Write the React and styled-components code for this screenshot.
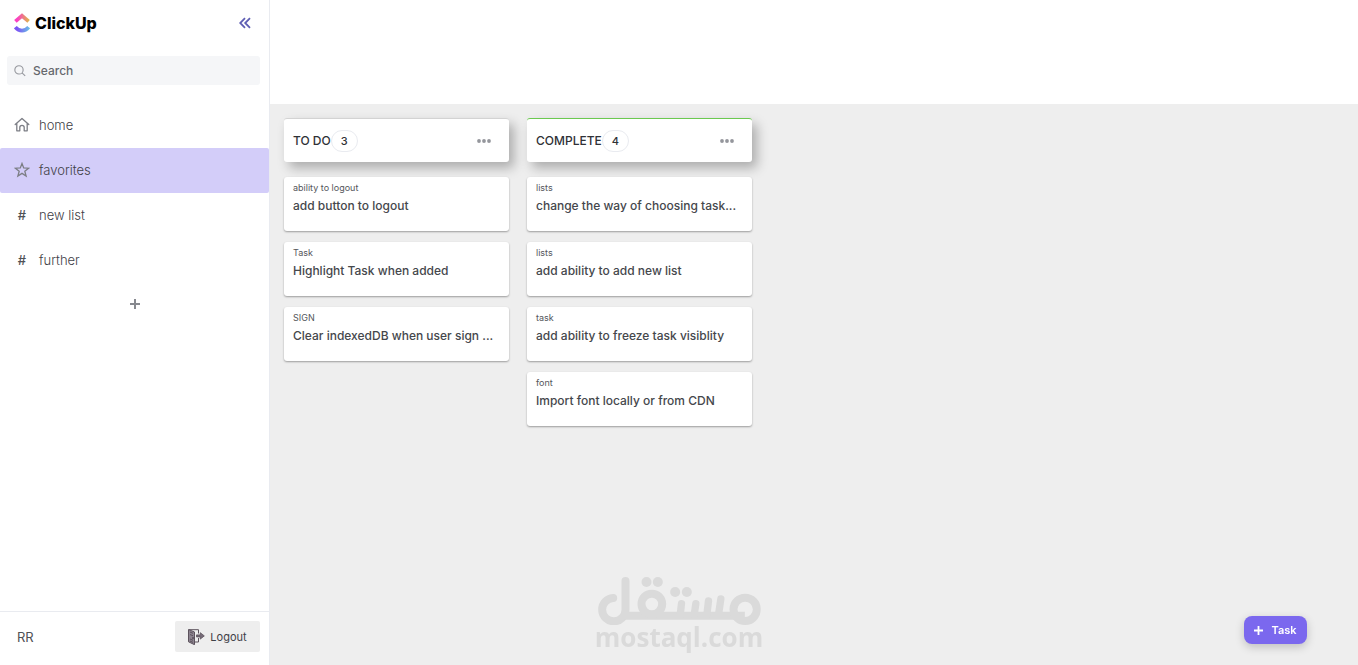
import React, { useState } from "react"
import styled, { createGlobalStyle } from "styled-components"

const GlobalStyle = createGlobalStyle`
    * {
        box-sizing: border-box;
    }
    body {
        margin: 0;
        font-family: "Inter", "Liberation Sans", sans-serif;
        font-size: 13px;
        color: #4f5155;
        background: #ffffff;
    }
    button, input {
        font-family: inherit;
    }
`

const Layout = styled.div`
    display: flex;
    min-height: 100vh;
`
const Sidebar = styled.aside`
    display: flex;
    flex-direction: column;
    flex: 0 0 270px;
    border-right: 1px solid #e9ebf0;
    background: #ffffff;
`
const Brand = styled.div`
    display: flex;
    align-items: center;
    justify-content: space-between;
    height: 46px;
    padding: 0 18px 0 14px;
`
const Logo = styled.a`
    display: flex;
    align-items: center;
    gap: 5px;
    color: #000000;
    font-size: 16px;
    font-weight: 800;
    text-decoration: none;
`
const IconButton = styled.button`
    display: flex;
    align-items: center;
    justify-content: center;
    padding: 0;
    border: none;
    background: none;
    color: ${props => props.$color || "#87898f"};
    cursor: pointer;
`
const SearchBox = styled.label`
    display: flex;
    align-items: center;
    gap: 7px;
    height: 29px;
    margin: 10px 9px 18px 7px;
    padding: 0 7px;
    border-radius: 3px;
    background: #f5f6f8;
`
const SearchInput = styled.input`
    flex: 1;
    min-width: 0;
    padding: 0;
    border: none;
    outline: none;
    background: none;
    font-size: 12px;
    font-weight: 500;
    color: #4f5155;
    &::placeholder {
        color: #66686d;
        opacity: 1;
    }
`
const Nav = styled.nav`
    display: flex;
    flex-direction: column;
    flex: 1;
`
const NavItem = styled.a`
    display: flex;
    align-items: center;
    gap: 9px;
    height: 45px;
    padding: 0 14px 1px;
    border-radius: 2px;
    background: ${props => (props.$active ? "#d3cdf9" : "transparent")};
    color: #3f4147;
    font-size: 13px;
    font-weight: 300;
    text-decoration: none;
`
const NavIcon = styled.span`
    display: flex;
    justify-content: center;
    width: 16px;
    padding-bottom: 1px;
    color: #7c7e85;
`
const Hash = styled.span`
    color: #4f5155;
    font-weight: 500;
`
const AddList = styled(IconButton)`
    height: 42px;
`
const Footer = styled.footer`
    display: flex;
    align-items: center;
    justify-content: space-between;
    height: 54px;
    padding: 0 9px 4px 17px;
    border-top: 1px solid #e9ebf0;
`
const LogoutButton = styled.button`
    display: flex;
    align-items: center;
    justify-content: center;
    gap: 5px;
    width: 85px;
    height: 31px;
    padding: 0;
    border: none;
    border-radius: 2px;
    background: #eeeeee;
    color: #3f4147;
    font-size: 11px;
    cursor: pointer;
`

const Main = styled.main`
    display: flex;
    flex-direction: column;
    flex: 1;
    min-width: 0;
`
const TopBar = styled.header`
    height: 104px;
    background: #ffffff;
`
const Board = styled.section`
    display: flex;
    align-items: flex-start;
    flex: 1;
    gap: 18px;
    padding: 14px;
    background: #eeeeee;
`
const Column = styled.div`
    display: flex;
    flex-direction: column;
    gap: 11px;
    width: 225px;
`
const ColumnHead = styled.div`
    display: flex;
    align-items: center;
    height: 44px;
    margin-bottom: 4px;
    padding: 0 18px 0 9px;
    border-top: 1px solid ${props => props.$color};
    border-radius: 3px;
    background: #ffffff;
    box-shadow: 5px 6px 12px rgba(0, 0, 0, 0.28);
`
const ColumnTitle = styled.h2`
    margin: 0;
    color: #2f3136;
    font-size: 12px;
    font-weight: 500;
`
const Count = styled.span`
    display: flex;
    align-items: center;
    justify-content: center;
    width: 27px;
    height: 22px;
    margin-right: auto;
    border: 1px solid #e9ebf0;
    border-radius: 11px;
    color: #2f3136;
    font-size: 11px;
    font-weight: 500;
`
const Card = styled.article`
    height: 54px;
    padding: 5px 9px;
    border-radius: 3px;
    background: #ffffff;
    box-shadow: 0 1px 2px rgba(0, 0, 0, 0.35);
`
const CardTag = styled.div`
    color: #54565b;
    font-size: 9px;
    line-height: 12px;
`
const CardTitle = styled.div`
    overflow: hidden;
    margin-top: 3px;
    color: #45474c;
    font-size: 12px;
    font-weight: 500;
    line-height: 18px;
    text-overflow: ellipsis;
    white-space: nowrap;
`
const TaskButton = styled.button`
    position: fixed;
    right: 51px;
    bottom: 21px;
    display: flex;
    align-items: center;
    justify-content: center;
    gap: 8px;
    width: 63px;
    height: 28px;
    padding: 0;
    border: none;
    border-radius: 8px;
    background: #7b68ee;
    box-shadow: 0 3px 10px rgba(0, 0, 0, 0.2);
    color: #ffffff;
    font-size: 11px;
    font-weight: 600;
    cursor: pointer;
`
const Watermark = styled.div`
    position: fixed;
    left: 50%;
    bottom: 15px;
    display: flex;
    flex-direction: column;
    align-items: center;
    transform: translateX(-50%);
    color: #dadada;
    font-family: "Open Sans", "Liberation Sans", sans-serif;
    font-size: 26px;
    font-weight: 700;
    line-height: 25px;
    pointer-events: none;
`

const ClickUpMark = () => (
    <svg width="16" height="20" viewBox="0 0 16 20" fill="none" aria-hidden="true">
        <defs>
            <linearGradient id="roof" x1="0" x2="16" y1="0" y2="0" gradientUnits="userSpaceOnUse">
                <stop offset="0.2" stopColor="#fb3fc4" />
                <stop offset="0.9" stopColor="#dfb04f" />
            </linearGradient>
            <linearGradient id="smile" x1="0" x2="16" y1="0" y2="0" gradientUnits="userSpaceOnUse">
                <stop offset="0.2" stopColor="#7c55f5" />
                <stop offset="1" stopColor="#68c3e4" />
            </linearGradient>
        </defs>
        <path d="M1.4 8.4 8 2.700l6.600 5.700" stroke="url(#roof)" strokeWidth="3.800" />
        <path d="M1.300 14.200C5 18.700 11 18.700 14.700 14.200" stroke="url(#smile)" strokeWidth="3.800" />
    </svg>
)

const CollapseIcon = () => (
    <svg width="12" height="12" viewBox="0 0 12 12" fill="none" stroke="currentColor" strokeWidth="1.800">
        <path d="M6 1.200 1.200 6 6 10.800M11 1.200 6.200 6l4.800 4.800" />
    </svg>
)

const SearchIcon = () => (
    <svg width="12" height="12" viewBox="0 0 13 13" fill="none" stroke="#96989e" strokeWidth="1.200" aria-hidden="true">
        <circle cx="5.400" cy="5.300" r="4.500" />
        <path d="m8.700 8.600 3.400 3.200" />
    </svg>
)

const HomeIcon = () => (
    <svg width="16" height="16" viewBox="0 0 16 16" fill="none" stroke="currentColor" strokeWidth="1.300" strokeLinejoin="round" strokeLinecap="round">
        <path d="M1.200 7.600 8 1.500l6.800 6.100M2.800 6.400v7.400h3V10.500a2.200 2.200 0 0 1 4.400 0v3.300h3V6.400" />
    </svg>
)

const StarIcon = () => (
    <svg width="16" height="16" viewBox="0 0 16 16" fill="none" stroke="currentColor" strokeWidth="1.300" strokeLinejoin="miter">
        <path d="m8 1.500 1.700 4.400 4.900.3-3.800 3 1.300 4.900L8 11.400l-4.100 2.700 1.300-4.900-3.800-3 4.900-.3z" />
    </svg>
)

const PlusIcon = ({ size }) => (
    <svg width={size} height={size} viewBox="0 0 10 10" stroke="currentColor" strokeWidth="2" aria-hidden="true">
        <path d="M5 0v10M0 5h10" />
    </svg>
)

const DotsIcon = () => (
    <svg width="14" height="4" viewBox="0 0 14 4" fill="#94969c">
        <circle cx="2" cy="2" r="1.900" />
        <circle cx="7" cy="2" r="1.900" />
        <circle cx="12" cy="2" r="1.900" />
    </svg>
)

const DoorIcon = () => (
    <svg width="17" height="16" viewBox="0 0 17 16" aria-hidden="true">
        <path d="M1 .7h9.500v3.800M10.500 9v4H6.500" fill="none" stroke="#5c525c" />
        <path d="M.5.500 6.500 3v12.700L.5 12.800z" fill="#8d8490" stroke="#5c525c" />
        <path d="M2 3l3 1.300M2 5.500l3 1.300M2 10l3 1.300M2 12l3 1.400" stroke="#5c525c" />
        <circle cx="5" cy="9" r=".800" fill="#332b33" />
        <path d="M8.500 5.900h3.800V3.700l4 3.200-4 3.200V7.900H8.500z" fill="#776c79" stroke="#5c525c" strokeWidth=".800" />
    </svg>
)

const WatermarkLogo = () => (
    <svg width="163" height="48" viewBox="51 36 489 144" fill="none" stroke="currentColor" strokeWidth="24" strokeLinecap="round" aria-hidden="true">
        <path d="M97 99A35 35 0 1 0 134 134V48" />
        <path d="M130 152H492" strokeLinecap="butt" />
        <circle cx="213" cy="117" r="31" />
        <circle cx="493" cy="133" r="35" />
        <path d="M302 116 298 150M345 116 340 150M383 108 378 150M420 102 413 150" strokeWidth="22" />
        <g fill="currentColor" stroke="none">
            <circle cx="197" cy="51" r="15" />
            <circle cx="231" cy="51" r="15" />
            <circle cx="283" cy="81" r="15" />
            <circle cx="318" cy="81" r="15" />
        </g>
    </svg>
)

const lists = [
    { name: "home", icon: <HomeIcon /> },
    { name: "favorites", icon: <StarIcon /> },
    { name: "new list", icon: <Hash>#</Hash> },
    { name: "further", icon: <Hash>#</Hash> },
]

const columns = [
    {
        title: "TO DO",
        color: "#d3d3d3",
        tasks: [
            { tag: "ability to logout", title: "add button to logout" },
            { tag: "Task", title: "Highlight Task when added" },
            { tag: "SIGN", title: "Clear indexedDB when user sign ..." },
        ],
    },
    {
        title: "COMPLETE",
        color: "#6bc950",
        tasks: [
            { tag: "lists", title: "change the way of choosing task..." },
            { tag: "lists", title: "add ability to add new list" },
            { tag: "task", title: "add ability to freeze task visiblity" },
            { tag: "font", title: "Import font locally or from CDN" },
        ],
    },
]

export default function App() {
    const [active, setActive] = useState("favorites")
    const [search, setSearch] = useState("")

    return (
        <>
            <GlobalStyle />
            <Layout>
                <Sidebar>
                    <Brand>
                        <Logo href="#"><ClickUpMark />ClickUp</Logo>
                        <IconButton $color="#5f5fb4" aria-label="Collapse sidebar"><CollapseIcon /></IconButton>
                    </Brand>
                    <SearchBox>
                        <SearchIcon />
                        <SearchInput
                            type="text"
                            placeholder="Search"
                            aria-label="Search"
                            value={search}
                            onChange={e => { setSearch(e.target.value) }}
                        />
                    </SearchBox>
                    <Nav>
                        {lists.map(item => (
                            <NavItem
                                key={item.name}
                                href="#"
                                $active={active === item.name}
                                onClick={() => { setActive(item.name) }}
                            >
                                <NavIcon>{item.icon}</NavIcon>
                                {item.name}
                            </NavItem>
                        ))}
                        <AddList aria-label="Add list"><PlusIcon size={10} /></AddList>
                    </Nav>
                    <Footer>
                        <span>RR</span>
                        <LogoutButton><DoorIcon />Logout</LogoutButton>
                    </Footer>
                </Sidebar>
                <Main>
                    <TopBar />
                    <Board>
                        {columns.map(column => (
                            <Column key={column.title}>
                                <ColumnHead $color={column.color}>
                                    <ColumnTitle>{column.title}</ColumnTitle>
                                    <Count>{column.tasks.length}</Count>
                                    <IconButton aria-label="Column menu"><DotsIcon /></IconButton>
                                </ColumnHead>
                                {column.tasks.map(task => (
                                    <Card key={task.title}>
                                        <CardTag>{task.tag}</CardTag>
                                        <CardTitle>{task.title}</CardTitle>
                                    </Card>
                                ))}
                            </Column>
                        ))}
                    </Board>
                </Main>
            </Layout>
            <Watermark><WatermarkLogo />mostaql.com</Watermark>
            <TaskButton><PlusIcon size={9} />Task</TaskButton>
        </>
    )
}
